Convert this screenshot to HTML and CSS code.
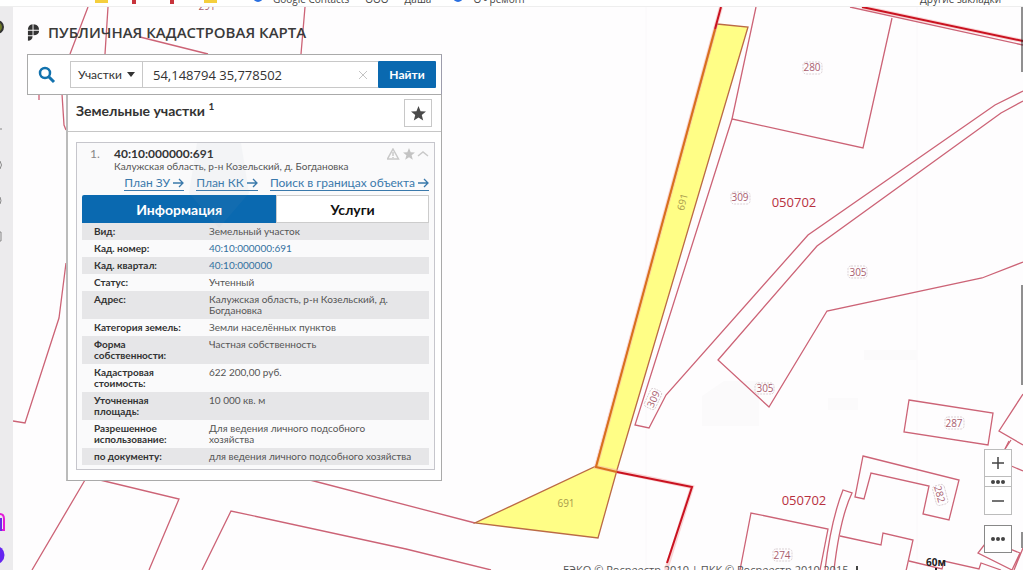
FILE: index.html
```html
<!DOCTYPE html>
<html lang="ru">
<head>
<meta charset="utf-8">
<title>Публичная кадастровая карта</title>
<link rel="stylesheet" href="styles.css">
</head>
<body>
<div class="app">
  <nav class="bookmarks" aria-label="Закладки">
    <span class="folder"></span><span class="mark-red"></span><span class="mark-red"></span><span class="folder"></span>
    <span class="dot dot-first"></span><span class="bm">Google Contacts</span><span class="bm">ООО</span><span class="bm bm-gap">Даша</span>
    <span class="dot"></span><span class="bm">О - ремонт</span>
    <span class="bm bm-last">Другие закладки</span>
  </nav>
  <div class="body">
    <aside class="rail">
      <svg class="rail-icons" viewBox="0 7 13 563" preserveAspectRatio="xMinYMin slice" aria-hidden="true">
        <circle cx="-3" cy="27" r="6" fill="#6f7a27" stroke="#333" stroke-width="2"/>
        <g fill="none" stroke="#888"><path d="M0 129h2M0 161q3 4 0 8M0 197q2 4 0 7M0 232h1v9h-1"/></g>
        <path d="M0 514q4 0 4 5v11H0" fill="none" stroke="#e21bd8" stroke-width="2"/>
        <path d="M0 519h1v11H0" stroke="#6a2be8" stroke-width="2"/>
        <circle cx="-5" cy="555" r="9.500" fill="#6524f0"/>
      </svg>
    </aside>
    <main class="map">
      <svg class="canvas" viewBox="13 7 1010 563" preserveAspectRatio="xMinYMin slice" role="img" aria-label="Карта участков">
        <g class="tiles"><path d="M917 7V570M646 7V570"/></g>
        <g class="ghost"><path d="M702 396l22-15h35v45h-57zM864 350h53v10h-53zM828 398h30v12h-30z"/></g>
        <g class="parcel">
          <path d="M88 7L70 54M108 7L105 54M140 37L208 54M305 7L301 54"/>
          <path d="M39 94v6M62 94l2 31 2 5M66 263l-7 55-34 105-12-2"/>
          <path d="M32 570L85 480M100 480l79 19-30 71M202 570l29-59 175 38 85 21M310 480l165 43"/>
          <path d="M756 7L732 119l131 29L892 18M732 119L635 425l14 3 17-33 142-160 187-130 28-14"/>
          <path d="M1023 101l-22 12-184 133-99 114 51 47 58-96 155-33 41-16"/>
          <path d="M850 7l173 38M909 400l84 13-5 32-84-13zM1023 394l-24 37 24 14M1011 440l-6 9"/>
          <path d="M863 456l96 24-10 40-26-6 6-28-58-13-7 26-9-2z"/>
          <path d="M740 570l11-57 77 16-8 41M825 570q6-50 18-80l9 3q-12 25-18 77M840 536l41 9 2-12 30 7-7 31M909 561l33 8 2-8 35 8 2-6 20 7"/>
          <path d="M1023 471l-14-6M988 540l32 13-8 17-34-17zM1014 570l9-22M1005 449l4-8"/>
        </g>
        <path class="selected" d="M717 24l31 3-131 443-19 68-123-15 121-57z"/>
        <path class="quarter-halo" d="M721 7L596 467l96 20-26 83M862 7l161 34"/>
        <path class="quarter" d="M721 7l-6 22M617 472l75 15-25 76M862 7l161 34"/>
        <path class="edge" d="M715 29L596 467l21 5"/>
        <g class="label">
          <text x="207" y="10">291</text><text x="812" y="71">280</text><text x="740" y="201">309</text>
          <text x="858" y="276">305</text><text x="765" y="392">305</text><text x="954" y="427">287</text>
          <text x="782" y="559">274</text>
          <text x="653" y="403" transform="rotate(-65 653 399)">309</text>
          <text x="940" y="498" transform="rotate(75 940 494)">282</text>
        </g>
        <g class="pill">
          <rect x="803" y="62" width="19" height="12" rx="3"/><rect x="731" y="192" width="19" height="12" rx="3"/>
          <rect x="848" y="266" width="19" height="12" rx="3"/><rect x="755" y="383" width="19" height="11" rx="3"/>
          <rect x="945" y="417" width="19" height="12" rx="3"/><rect x="773" y="549" width="19" height="12" rx="3"/>
          <rect x="643" y="393" width="20" height="12" rx="3" transform="rotate(-65 653 399)"/>
          <rect x="931" y="488" width="20" height="12" rx="3" transform="rotate(75 940 494)"/>
        </g>
        <g class="label-sel"><text x="566" y="507">691</text><text x="682" y="206" transform="rotate(-75 682 202)">691</text></g>
        <g class="block"><text x="794" y="207">050702</text><text x="804" y="505">050702</text></g>
        <path d="M1022 7v65M1022 285v100M1022 532v16" stroke="#222" fill="none"/>
      </svg>

      <section class="workspace">
        <header class="brand">
          <svg class="logo" viewBox="0 0 14 20" aria-hidden="true">
            <path fill="#333" d="M6 1v6H1C1 4 3 1 6 1zM7 1C11 1 13 4 13 7H7zM1 8h5v5H1zM7 8h6C13 11 11 13 7 13zM1 14h5C6 17 4 19 1 19z"/>
          </svg>
          <h1>ПУБЛИЧНАЯ КАДАСТРОВАЯ КАРТА</h1>
        </header>
        <form class="search">
          <svg class="lens" viewBox="0 0 18 18" aria-hidden="true"><circle cx="7" cy="7" r="5" fill="none" stroke="#1272ae" stroke-width="2.500"/><path d="M11 11l5 5" stroke="#1272ae" stroke-width="3"/></svg>
          <div class="field">
            <button type="button" class="kind">Участки <span class="caret"></span></button>
            <input class="query" type="text" aria-label="Поиск" value="54,148794 35,778502">
            <button type="button" class="clear" aria-label="Очистить"><svg viewBox="0 0 8 8"><path d="M0 0l8 8M8 0L0 8" stroke="#c4c4c4"/></svg></button>
          </div>
          <button type="button" class="find">Найти</button>
        </form>

        <section class="results">
          <div class="results-head">
            <h2>Земельные участки <sup>1</sup></h2>
            <button type="button" class="fav" aria-label="Избранное"><svg viewBox="0 0 16 16"><path fill="#4a4a4a" d="M8 0l2.200 5.500 5.800.4-4.500 3.700L13 15.500 8 12.300 3 15.500l1.500-5.900L0 5.900l5.800-.4z"/></svg></button>
          </div>
          <div class="results-body">
            <article class="card">
              <svg class="pin" viewBox="0 0 60 90" aria-hidden="true"><path d="M8 0h44l8 50-30 35L0 50z"/></svg>
              <div class="card-head">
                <span class="num">1.</span>
                <div class="ident">
                  <h3>40:10:000000:691</h3>
                  <p>Калужская область, р-н Козельский, д. Богдановка</p>
                </div>
                <svg class="tools" viewBox="0 0 42 12" aria-hidden="true">
                  <path d="M6 1l5.500 10H.5zM6 4v4M6 9v1" fill="none" stroke="#c9c9c9" stroke-width="1.500"/>
                  <path fill="#c3c3c3" d="M22 0l1.700 4.200 4.300.3-3.400 2.800 1.200 4.400L22 9.200l-3.800 2.500 1.200-4.400L16 4.500l4.300-.3z"/>
                  <path d="M31 8l5-4 5 4" fill="none" stroke="#c9c9c9" stroke-width="1.500"/>
                </svg>
              </div>
              <div class="links">
                <a href="#">План ЗУ <svg viewBox="0 0 11 10"><path d="M0 5h10M6 1l4 4-4 4"/></svg></a>
                <a href="#">План КК <svg viewBox="0 0 11 10"><path d="M0 5h10M6 1l4 4-4 4"/></svg></a>
                <a href="#">Поиск в границах объекта <svg viewBox="0 0 11 10"><path d="M0 5h10M6 1l4 4-4 4"/></svg></a>
              </div>
              <div class="tabs">
                <button type="button" class="tab active">Информация</button>
                <button type="button" class="tab">Услуги</button>
              </div>
              <table class="facts">
                <tr><th scope="row">Вид:</th><td>Земельный участок</td></tr>
                <tr><th scope="row">Кад. номер:</th><td><a href="#">40:10:000000:691</a></td></tr>
                <tr><th scope="row">Кад. квартал:</th><td><a href="#">40:10:000000</a></td></tr>
                <tr><th scope="row">Статус:</th><td>Учтенный</td></tr>
                <tr><th scope="row">Адрес:</th><td>Калужская область, р-н Козельский, д.<br>Богдановка</td></tr>
                <tr><th scope="row">Категория земель:</th><td>Земли населённых пунктов</td></tr>
                <tr><th scope="row">Форма<br>собственности:</th><td>Частная собственность</td></tr>
                <tr><th scope="row">Кадастровая<br>стоимость:</th><td>622 200,00 руб.</td></tr>
                <tr><th scope="row">Уточненная<br>площадь:</th><td>10 000 кв. м</td></tr>
                <tr><th scope="row">Разрешенное<br>использование:</th><td>Для ведения личного подсобного<br>хозяйства</td></tr>
                <tr><th scope="row">по документу:</th><td>для ведения личного подсобного хозяйства</td></tr>
              </table>
            </article>
          </div>
        </section>
      </section>

      <div class="zoom">
        <button type="button" class="z-btn" aria-label="Приблизить"><svg viewBox="0 0 14 14"><path d="M1 7h12M7 1v12"/></svg></button>
        <button type="button" class="z-btn z-mid" aria-label="Масштаб"><i></i><i></i><i></i></button>
        <button type="button" class="z-btn" aria-label="Отдалить"><svg viewBox="0 0 14 14"><path d="M1 7h12"/></svg></button>
        <button type="button" class="z-btn z-more" aria-label="Ещё"><i></i><i></i><i></i></button>
      </div>
      <div class="scale">60м<span></span></div>
      <footer class="credits">ЕЭКО © Росреестр 2010 | ПКК © Росреестр 2010-2015<span class="credits-mark"></span></footer>
    </main>
  </div>
</div>
</body>
</html>
```
FILE: styles.css
```css
* { box-sizing: border-box; }
body { margin: 0; font-family: "Open Sans", "Noto Sans", sans-serif; color: #333; background: #fefdfe; }
button, input { font: inherit; color: inherit; margin: 0; padding: 0; }
h1, h2, h3, p { margin: 0; }
.app { display: flex; flex-direction: column; height: 100vh; overflow: hidden; }
.bookmarks { display: flex; align-items: flex-end; flex: none; height: 7px; padding: 0 22px 1px 95px; overflow: hidden; border-bottom: 1px solid #eee; background: #fff; }
.bm { font-size: 10px; line-height: 11px; color: #444; margin-right: 16px; white-space: nowrap; }
.bm-gap { margin-right: 22px; }
.bm-last { margin: 0 0 0 auto; }
.folder { width: 13px; height: 4px; margin: 0 24px 2px 0; background: #f5cf3d; }
.mark-red { width: 4px; height: 4px; margin: 0 34px 1px 0; background: #c8343c; }
.mark-red + .mark-red { margin-right: 30px; }
.dot { width: 10px; height: 10px; margin: 0 10px 3px 0; border-radius: 50%; background: #2a6fe0; flex: none; }
.dot-first { margin-left: 12px; }
.body { display: flex; flex: 1; min-height: 0; }
.rail { flex: none; width: 13px; background: #ecebed; overflow: hidden; }
.rail-icons { display: block; width: 13px; height: 100%; }
.map { position: relative; flex: 1; min-width: 0; overflow: hidden; }
.canvas { position: absolute; inset: 0; width: 100%; height: 100%; }
.tiles { fill: none; stroke: #faf8fa; }
.ghost { fill: #fbfafb; }
.parcel { fill: none; stroke: #cc6376; stroke-width: 1.3; }
.selected { fill: #fffe86; stroke: #bb6a45; stroke-width: 1.3; }
.quarter-halo { fill: none; stroke: #f6a9a9; stroke-opacity: .5; stroke-width: 4; }
.quarter { fill: none; stroke: #c91220; stroke-width: 2; }
.edge { fill: none; stroke: #d9701c; stroke-width: 2; }
.label, .label-sel, .block { text-anchor: middle; font-size: 10px; font-family: "Open Sans", sans-serif; }
.label { fill: #a9606e; }
.label-sel { fill: #a89a4c; }
.block { font-size: 13px; fill: #b8303f; }
.pill { fill: none; stroke: #cdbfc4; stroke-dasharray: 2 1; stroke-width: .7; }

.workspace { position: relative; width: 415px; margin-left: 14px; font-family: Lato, "Open Sans", "Noto Sans", sans-serif; }
.brand { display: flex; align-items: center; gap: 8px; height: 47px; padding-top: 3px; }
.logo { width: 13px; height: 19px; }
h1 { font-family: "Open Sans", "Noto Sans", sans-serif; font-size: 15px; line-height: 20px; font-weight: 600; color: #3a3a3a; white-space: nowrap; }
.search { display: flex; align-items: center; height: 41px; padding: 0 5px 0 10px; border: 1px solid #aaa; border-right-color: #9d9dac; background: #fff; }
.lens { width: 18px; height: 18px; margin-right: 14px; }
.field { display: flex; flex: 1; height: 27px; border: 1px solid #c8c8c8; border-right: 0; }
.kind { display: flex; align-items: center; justify-content: center; gap: 5px; width: 72px; border: 0; border-right: 1px solid #c8c8c8; background: #fff; font-size: 12px; }
.caret { border: 4px solid transparent; border-top: 5px solid #333; border-bottom: 0; }
.query { flex: 1; min-width: 0; padding-left: 10px; border: 0; background: #fff; font-family: "Open Sans", "Noto Sans", sans-serif; font-size: 13px; }
.clear { display: flex; align-items: center; justify-content: center; width: 30px; border: 0; background: #fff; }
.clear svg { width: 8px; height: 8px; }
.find { width: 58px; height: 27px; border: 0; border-radius: 1px; background: #0a69b0; color: #fff; font-size: 12px; font-weight: 700; }
.results { margin-left: 39px; border: 1px solid #aaa; border-top: 0; border-left: 2px solid #bbb; background: #fff; }
.results-head { display: flex; justify-content: space-between; height: 37px; padding: 4px 9px 0 8px; border-bottom: 1px solid #c6c6c6; }
h2 { font-size: 14px; line-height: 24px; font-weight: 700; }
sup { font-size: 10px; line-height: 0; }
.fav { display: flex; align-items: center; justify-content: center; width: 28px; height: 28px; border: 1px solid #c8c8c8; background: #fff; }
.fav svg { width: 15px; height: 15px; }
.results-body { padding: 10px 6px 10px 8px; }
.card { position: relative; padding: 4px 5px; border: 1px solid #c6c6cc; background: #fafafb; }
.pin { position: absolute; left: 112px; top: 0; width: 60px; height: 90px; pointer-events: none; z-index: 1; fill: #8fa4b8; opacity: .06; }
.card-head { display: flex; align-items: flex-start; padding-left: 8px; }
.num { width: 24px; font-size: 12px; line-height: 14px; color: #888; }
.ident { flex: 1; white-space: nowrap; }
h3 { font-size: 12px; line-height: 14px; font-weight: 700; }
.ident p { font-size: 10px; line-height: 11px; color: #555; }
.tools { width: 42px; height: 12px; margin-top: 1px; }
.links { display: flex; justify-content: flex-end; gap: 12px; margin: 4px 0; font-size: 12px; line-height: 16px; white-space: nowrap; }
.links a { color: #3a79ab; border-bottom: 1px solid #3a79ab; text-decoration: none; line-height: 14px; }
.links svg { width: 11px; height: 10px; vertical-align: -1px; fill: none; stroke: #3a79ab; stroke-width: 1.3; }
.tabs { display: flex; height: 28px; }
.tab { flex: 152; border: 1px solid #ccc; background: #fff; color: #111; font-size: 14px; font-weight: 700; }
.tab.active { flex: 196; border: 0; border-radius: 2px 0 0 0; background: #0a69b0; color: #fff; }
.facts { width: 100%; border-collapse: collapse; font-size: 10px; line-height: 11px; text-align: left; }
.facts tr:nth-child(odd) { background: #e6e6e8; }
.facts th, .facts td { padding: 3px 0; vertical-align: top; white-space: nowrap; }
.facts th { width: 127px; padding-left: 12px; font-weight: 700; }
.facts td { color: #555; }
.facts a { color: #33719f; text-decoration: none; }

.zoom { position: absolute; right: 11px; top: 442px; width: 28px; display: flex; flex-direction: column; }
.z-btn { display: flex; align-items: center; justify-content: center; gap: 1px; height: 28px; border: 1px solid #bcbcbc; background: #fff; }
.z-btn + .z-btn { border-top: 0; }
.z-btn svg { width: 14px; height: 14px; stroke: #444; stroke-width: 1.5; }
.z-btn i { width: 4px; height: 4px; border-radius: 50%; background: #444; }
.z-mid { height: 10px; }
.zoom .z-more { margin-top: 10px; border: 1px solid #888; height: 28px; }
.scale { position: absolute; right: 77px; bottom: 0; height: 14px; font-size: 10px; line-height: 12px; font-weight: 700; color: #222; }
.scale span { display: block; width: 2px; height: 2px; margin: 0 auto; background: #222; }
.credits { position: absolute; left: 550px; bottom: 0; height: 8px; overflow: hidden; font-size: 11px; line-height: 16px; color: #555; white-space: nowrap; }
.credits-mark { display: inline-block; width: 2px; height: 8px; margin-left: 8px; background: #444; }
```
